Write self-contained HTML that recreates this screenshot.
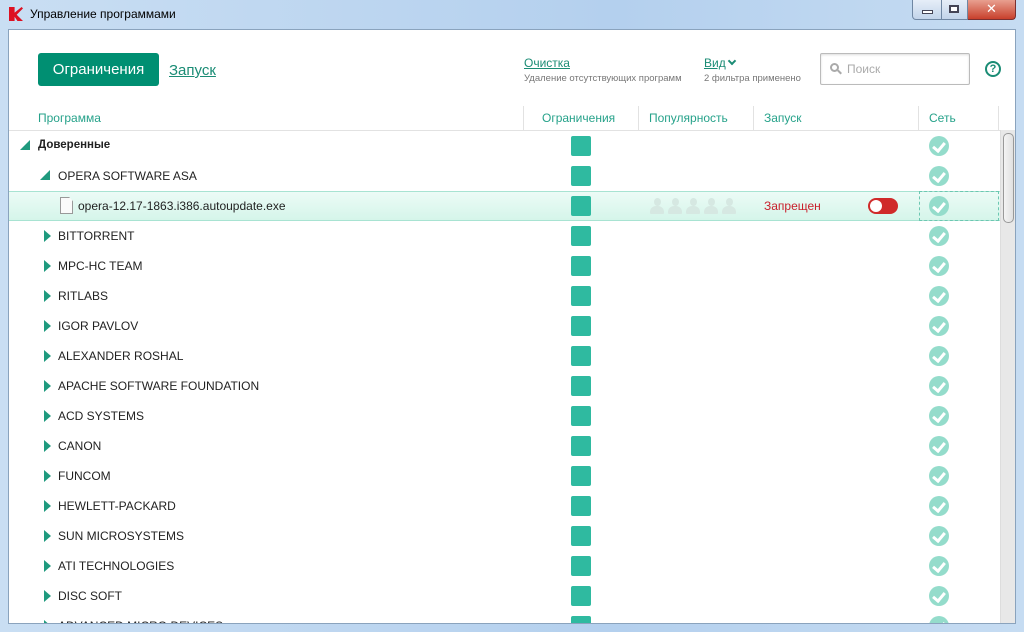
<!DOCTYPE html><html><head><meta charset="utf-8"><style>
*{margin:0;padding:0;box-sizing:border-box}
body{width:1024px;height:632px;overflow:hidden;background:linear-gradient(90deg,#c9def3,#b4d0ee 60%,#c6dcf2);font-family:"Liberation Sans","DejaVu Sans",sans-serif;position:relative}
.abs{position:absolute}
.title{left:30px;top:7px;font-size:12px;color:#000}
.client{left:8px;top:29px;width:1008px;height:595px;background:#fff;border:1px solid #8aa3bd;overflow:hidden}
.btns{left:912px;top:0;width:106px;height:20px}
.rowt{position:absolute;left:0;font-size:12px;color:#222}
.sq{position:absolute;left:562px;width:20px;height:20px;background:#2fbaa0;border-radius:2px}
.ck{position:absolute;left:920px;width:20px;height:20px;border-radius:50%;background:#94dccb}
.ck:after{content:"";position:absolute;left:6px;top:4px;width:5px;height:9px;border:solid #fff;border-width:0 3px 3px 0;transform:rotate(40deg)}
.tri{position:absolute;width:0;height:0;border-top:6px solid transparent;border-bottom:6px solid transparent;border-left:7px solid #1f9a7e}
.tdn{position:absolute;width:0;height:0;border-left:10px solid transparent;border-bottom:10px solid #1f9a7e}
.hd{position:absolute;top:81px;font-size:12px;color:#26a28a}
.sep{position:absolute;top:76px;width:1px;height:24px;background:#e2e2e2}
.p{position:absolute;width:14px;height:16px}
.p:before{content:"";position:absolute;left:4px;top:0;width:7px;height:8px;border-radius:50%;background:#d6e8e2}
.p:after{content:"";position:absolute;left:0;top:8px;width:14px;height:8px;border-radius:6px 6px 1px 1px;background:#d6e8e2}
</style></head><body>
<div class="abs" style="left:9px;top:7px;width:14px;height:14px;background:#d12;clip-path:polygon(0 0,40% 0,40% 40%,90% 0,100% 10%,55% 55%,100% 100%,60% 100%,40% 70%,40% 100%,0 100%)"></div>
<div class="abs title">Управление программами</div>
<div class="abs btns">
<div class="abs" style="left:0;top:0;width:30px;height:20px;border:1px solid #6f87a3;border-top:0;border-radius:0 0 0 4px;background:linear-gradient(#e6eef8,#c2d4ea)"><div class="abs" style="left:9px;top:10px;width:11px;height:4px;background:#fff;border:1px solid #445"></div></div>
<div class="abs" style="left:30px;top:0;width:26px;height:20px;border:1px solid #6f87a3;border-top:0;border-left:0;background:linear-gradient(#e6eef8,#c2d4ea)"><div class="abs" style="left:7px;top:5px;width:10px;height:8px;border:2px solid #445;background:#fff"></div></div>
<div class="abs" style="left:56px;top:0;width:48px;height:20px;border:1px solid #7a3030;border-top:0;border-left:0;border-radius:0 0 4px 0;background:linear-gradient(#e8a090,#c8402c);color:#fff;font-weight:bold;font-size:13px;text-align:center;line-height:18px">✕</div>
</div>
<div class="abs client">
<div class="abs" style="left:29px;top:23px;width:121px;height:33px;background:#008f72;border-radius:3px;color:#fff;font-size:15px;text-align:center;line-height:33px">Ограничения</div>
<div class="abs" style="left:160px;top:32px;font-size:15px;color:#1b8c75;text-decoration:underline">Запуск</div>
<div class="abs" style="left:515px;top:26px;font-size:12px;color:#1b8c75;text-decoration:underline">Очистка</div>
<div class="abs" style="left:515px;top:43px;font-size:9.5px;color:#777">Удаление отсутствующих программ</div>
<div class="abs" style="left:695px;top:26px;font-size:12px;color:#1b8c75"><u>Вид</u><span style="display:inline-block;width:6px;height:6px;border:solid #1b8c75;border-width:0 2px 2px 0;transform:rotate(45deg);margin-left:3px;position:relative;top:-3px"></span></div>
<div class="abs" style="left:695px;top:43px;font-size:9.5px;color:#777">2 фильтра применено</div>
<div class="abs" style="left:811px;top:23px;width:150px;height:32px;border:1px solid #bbb;border-radius:2px;box-shadow:inset 0 1px 2px #ddd;color:#aaa;font-size:12px;line-height:30px;padding-left:26px">Поиск
<div class="abs" style="left:9px;top:9px;width:9px;height:9px;border:2px solid #aaa;border-radius:50%"></div><div class="abs" style="left:16px;top:17px;width:5px;height:2px;background:#aaa;transform:rotate(45deg)"></div></div>
<div class="abs" style="left:976px;top:31px;width:16px;height:16px;border:2px solid #1b8c75;border-radius:50%;color:#1b8c75;font-size:11px;font-weight:bold;text-align:center;line-height:12px">?</div>
<div class="hd" style="left:29px">Программа</div>
<div class="hd" style="left:533px">Ограничения</div>
<div class="hd" style="left:640px">Популярность</div>
<div class="hd" style="left:755px">Запуск</div>
<div class="hd" style="left:920px">Сеть</div>
<div class="sep" style="left:514px"></div><div class="sep" style="left:629px"></div><div class="sep" style="left:744px"></div><div class="sep" style="left:909px"></div><div class="sep" style="left:989px"></div>
<div class="abs" style="left:0;top:100px;width:992px;height:1px;background:#e2e2e2"></div>
<div class="abs" style="left:0;top:161px;width:991px;height:30px;background:linear-gradient(#ecfbf6,#d5f5ea);border-top:1px solid #a8e3d2;border-bottom:1px solid #a8e3d2"></div>
<div class="abs" style="left:910px;top:161px;width:80px;height:30px;border:1px dashed #6cc7b1"></div>
<div id="rows"></div>
<div class="abs" style="left:991px;top:100px;width:17px;height:495px;background:#e8e8e8;border-left:1px solid #ddd"></div>
<div class="abs" style="left:994px;top:103px;width:11px;height:90px;background:linear-gradient(90deg,#f4f4f4,#e0e0e0);border:1px solid #999;border-radius:5px"></div>
</div>
<script>
var names=[["Доверенные",0],["OPERA SOFTWARE ASA",1],["opera-12.17-1863.i386.autoupdate.exe",2],["BITTORRENT"],["MPC-HC TEAM"],["RITLABS"],["IGOR PAVLOV"],["ALEXANDER ROSHAL"],["APACHE SOFTWARE FOUNDATION"],["ACD SYSTEMS"],["CANON"],["FUNCOM"],["HEWLETT-PACKARD"],["SUN MICROSYSTEMS"],["ATI TECHNOLOGIES"],["DISC SOFT"],["ADVANCED MICRO DEVICES"]];
var h="";
names.forEach(function(n,i){var c=116+30*i;
 if(i==0)h+='<div class="tdn" style="left:11px;top:'+(c-6)+'px"></div><div class="rowt" style="left:29px;top:'+(c-7)+'px;font-weight:bold;font-size:11.5px">'+n[0]+'</div>';
 else if(i==1)h+='<div class="tdn" style="left:31px;top:'+(c-6)+'px"></div><div class="rowt" style="left:49px;top:'+(c-7)+'px">'+n[0]+'</div>';
 else if(i==2)h+='<div class="abs" style="left:51px;top:'+(c-9)+'px;width:13px;height:17px;border:1px solid #999;background:#fafafa;clip-path:polygon(0 0,70% 0,100% 25%,100% 100%,0 100%)"></div><div class="rowt" style="left:69px;top:'+(c-7)+'px">'+n[0]+'</div>';
 else h+='<div class="tri" style="left:35px;top:'+(c-6)+'px"></div><div class="rowt" style="left:49px;top:'+(c-7)+'px">'+n[0]+'</div>';
 h+='<div class="sq" style="top:'+(c-10)+'px"></div><div class="ck" style="top:'+(c-10)+'px"></div>';
});
var c=176;
for(var k=0;k<5;k++)h+='<div class="p" style="left:'+(641+k*18)+'px;top:'+(c-8)+'px"></div>';
h+='<div class="rowt" style="left:755px;top:'+(c-7)+'px;color:#c8202c">Запрещен</div>';
h+='<div class="abs" style="left:859px;top:'+(c-8)+'px;width:30px;height:16px;border-radius:8px;background:#d02a2a"><div class="abs" style="left:2px;top:2px;width:12px;height:12px;border-radius:50%;background:#fff"></div></div>';
document.getElementById("rows").innerHTML=h;
</script>
</body></html>
